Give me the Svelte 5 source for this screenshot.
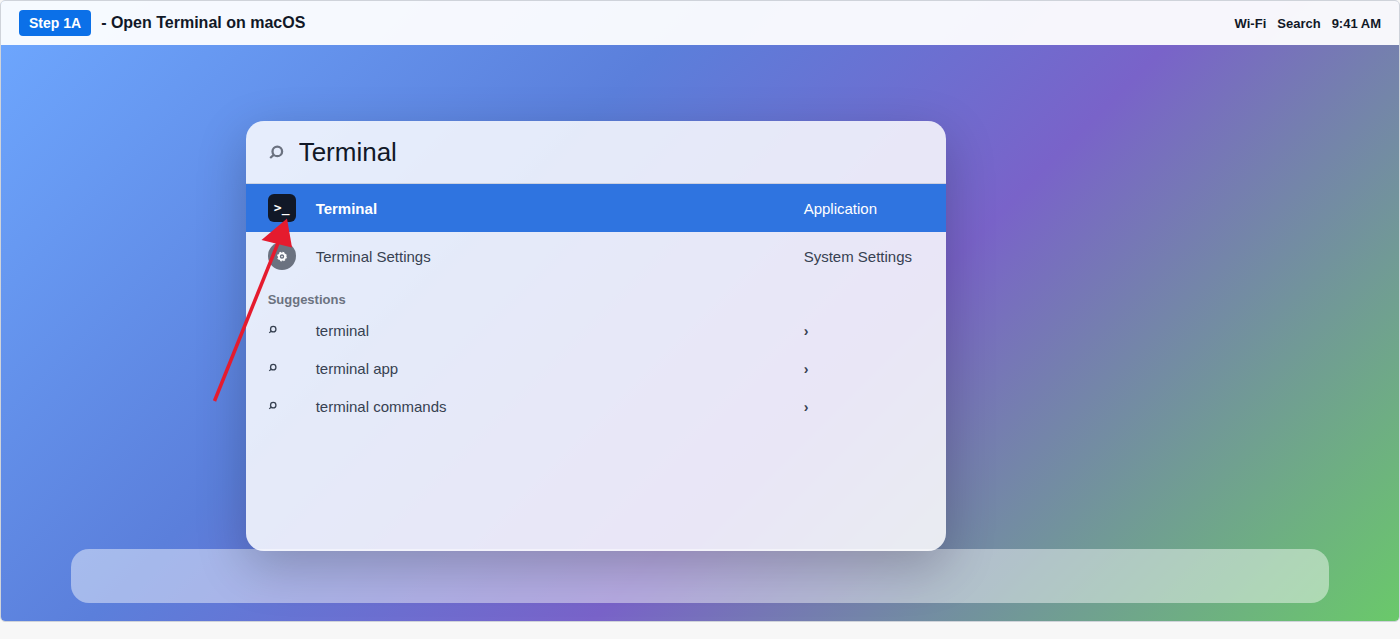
<script lang="ts">
  let query = $state('Terminal');

  const suggestions = ['terminal', 'terminal app', 'terminal commands'];
</script>

{#snippet glass()}
  <svg class="glass" viewBox="0 0 16 16" aria-hidden="true">
    <circle cx="9.3" cy="7.4" r="4.8" />
    <path d="M6 10.700 2.200 14" />
  </svg>
{/snippet}

<main class="screen">
  <header class="menubar">
    <span class="step">Step 1A</span>
    <h1>- Open Terminal on macOS</h1>
    <div class="status">
      <span>Wi-Fi</span>
      <span>Search</span>
      <span>9:41 AM</span>
    </div>
  </header>

  <div class="desktop">
    <div class="dock"></div>

    <section class="spotlight">
      <label class="search">
        {@render glass()}
        <input type="text" aria-label="Spotlight search" bind:value={query} />
      </label>

      <button class="row active">
        <span class="app-icon term">&gt;_</span>
        <b>Terminal</b>
        <span>Application</span>
      </button>
      <button class="row">
        <span class="app-icon gear">
          <svg viewBox="0 0 12 12" aria-hidden="true">
            <circle class="teeth" cx="6" cy="6.5" r="3.7" />
            <circle class="ring" cx="6" cy="6.5" r="2.7" />
            <circle class="hub" cx="6" cy="6.5" r="0.7" />
          </svg>
        </span>
        <span>Terminal Settings</span>
        <span>System Settings</span>
      </button>

      <h2>Suggestions</h2>
      {#each suggestions as text}
        <button class="row small">
          {@render glass()}
          <span>{text}</span>
          <span class="chevron">›</span>
        </button>
      {/each}

      <svg class="arrow" viewBox="0 0 80 190" aria-hidden="true">
        <path class="shaft" d="M4.500 187 68 29" />
        <path class="tip" d="M77 4.500 51.500 26 82 33.500Z" />
      </svg>
    </section>
  </div>
</main>

<style>
  :global(body) {
    margin: 0;
    background: #f7f7f7;
  }

  .screen {
    display: flex;
    flex-direction: column;
    overflow: hidden;
    border: 1px solid #cfd3da;
    border-radius: 5px;
    background: linear-gradient(135deg, #6ea8ff 0%, #5b7fdb 35%, #7963c9 60%, #6ac96a 100%) padding-box;
    font-family: "Liberation Sans", Arial, Helvetica, sans-serif;
    color: #111827;
  }

  .menubar {
    display: flex;
    align-items: center;
    gap: 10px;
    height: 44px;
    padding: 0 18px;
    background: rgba(255, 255, 255, .94);
  }
  .step {
    padding: 4px 10px;
    border-radius: 4px;
    background: #0b70e8;
    color: #fff;
    font-size: 14px;
    font-weight: 700;
    line-height: 18px;
  }
  h1 {
    margin: 0;
    font-size: 16px;
    line-height: 18px;
  }
  .status {
    display: flex;
    gap: 11px;
    margin-left: auto;
    font-size: 13px;
    font-weight: 700;
  }

  .desktop {
    position: relative;
    padding: 76px 0 70px;
  }
  .dock {
    position: absolute;
    right: 5%;
    bottom: 18px;
    left: 5%;
    height: 54px;
    border-radius: 18px;
    background: rgba(255, 255, 255, .45);
  }

  .spotlight {
    position: relative;
    box-sizing: border-box;
    width: 65%;
    max-width: 700px;
    min-height: 430px;
    margin-left: 17.5%;
    border-radius: 18px;
    background: rgba(255, 255, 255, .84);
    box-shadow: 0 16px 50px rgba(0, 0, 0, .22);
  }

  .search {
    display: flex;
    align-items: center;
    gap: 15px;
    height: 62px;
    padding: 0 22px;
    border-bottom: 1px solid rgba(17, 24, 39, .12);
    color: #6b7280;
  }
  .search input {
    flex: 1;
    min-width: 0;
    padding: 0;
    border: 0;
    outline: 0;
    background: none;
    color: #111827;
    font: 26px "Liberation Sans", Arial, Helvetica, sans-serif;
  }

  .glass {
    width: 9px;
    height: 9px;
    margin-bottom: 2px;
    fill: none;
    stroke: currentColor;
    stroke-width: 2.3;
  }
  .search .glass {
    width: 16px;
    height: 16px;
    margin: 0;
  }

  .row {
    display: grid;
    grid-template-columns: 28px 1fr 120px;
    align-items: center;
    gap: 20px;
    width: 100%;
    height: 48px;
    padding: 0 22px;
    border: 0;
    background: none;
    color: #374151;
    font: 15px "Liberation Sans", Arial, Helvetica, sans-serif;
    text-align: left;
  }
  .row.active {
    background: #2f74e0;
    color: #fff;
  }
  .row.small {
    height: 38px;
  }
  .chevron {
    padding-top: 2px;
    font-size: 14px;
    font-weight: 700;
  }

  .app-icon {
    display: flex;
    align-items: center;
    justify-content: center;
    width: 28px;
    height: 28px;
    color: #fff;
  }
  .term {
    border-radius: 6px;
    background: #111827;
    font: 700 13px/30px "DejaVu Sans Mono", "Liberation Mono", monospace;
  }
  .gear {
    border-radius: 50%;
    background: #6b7280;
  }
  .gear svg {
    width: 14px;
    height: 14px;
    fill: none;
    stroke: #fff;
  }
  .teeth { stroke-width: 1; stroke-dasharray: 1.6 1.3; }
  .ring { stroke-width: 1.6; }
  .hub { fill: #fff; stroke: none; }

  h2 {
    margin: 0;
    padding: 12px 22px 3px;
    color: #6b7280;
    font-size: 13px;
    line-height: 16px;
  }

  .arrow {
    position: absolute;
    top: 93px;
    left: -36px;
    width: 80px;
    height: 190px;
    overflow: visible;
    pointer-events: none;
  }
  .shaft { fill: none; stroke: #e51b2e; stroke-width: 3.5; }
  .tip { fill: #e51b2e; }
</style>
